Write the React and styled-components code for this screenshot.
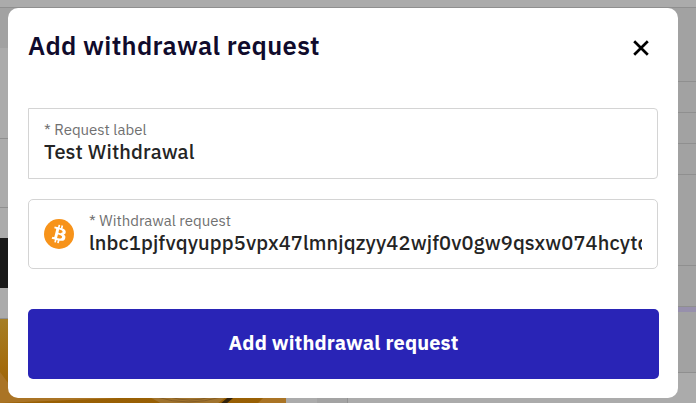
import React from "react";
import styled, { createGlobalStyle } from "styled-components";

const GlobalStyle = createGlobalStyle`
  * { box-sizing: border-box; }
  body { margin: 0; overflow: hidden; font-family: "IBM Plex Sans", Inter, "Noto Sans", sans-serif; font-feature-settings: "cv05" 1; }
`;

const Screen = styled.div`
  height: 403px;
  overflow: hidden;
  background: #ababab;
`;
const TopBar = styled.div`
  height: 8px;
  border-bottom: 1px solid #8f8f8f;
`;
const Columns = styled.div`
  display: grid;
  grid-template-columns: 317px 30px 1fr;
  height: 395px;
`;
const Feed = styled.div`
  display: flex;
  flex-direction: column;
`;
const Band = styled.div`
  flex: none;
  height: ${(p) => p.$h}px;
  background: ${(p) => p.$bg || "transparent"};
  border-bottom: ${(p) => (p.$line ? "1px solid #8f8f8f" : "none")};
`;
const Gutter = styled.div`
  background: #a3a3a3;
`;
const Side = styled(Feed)`
  border-left: 1px solid #929292;
`;
const Artwork = styled.svg`
  display: block;
  flex: none;
  width: 286px;
  height: 84px;
`;

const Modal = styled.section`
  position: absolute;
  top: 8px;
  left: 8px;
  width: 670px;
  height: 390px;
  padding: 20px 19px 19px 20px;
  border-radius: 10px;
  background: #fff;
  display: flex;
  flex-direction: column;
`;
const Header = styled.header`
  display: flex;
  justify-content: space-between;
  height: 80px;
`;
const Title = styled.h1`
  margin: 0;
  color: #100b2c;
  font-size: 25.5px;
  font-weight: 600;
  line-height: 36px;
  letter-spacing: ${(p) => p.$track}px;
  white-space: nowrap;
`;
const CloseButton = styled.button`
  width: 16px;
  height: 16px;
  margin: 12px 10px 0 0;
  padding: 0;
  border: 0;
  background: none;
  svg { display: block; }
`;
const Field = styled.label`
  display: flex;
  align-items: center;
  gap: 15px;
  width: 630px;
  height: ${(p) => p.$h}px;
  margin-bottom: ${(p) => p.$gap}px;
  padding: 0 15px;
  border: 1px solid #d4d4d4;
  border-radius: ${(p) => p.$radius};
`;
const FieldBody = styled.span`
  flex: 1;
  min-width: 0;
  height: 47px;
`;
const Caption = styled.span`
  display: block;
  color: #707070;
  font-size: 15px;
  line-height: 20px;
`;
const Value = styled.span`
  display: block;
  overflow: hidden;
  white-space: nowrap;
  color: #242424;
  font-size: 20px;
  font-weight: 500;
  line-height: 24px;
  padding-bottom: 2px;
  letter-spacing: ${(p) => p.$track}px;
`;
const Submit = styled.button`
  width: 631px;
  height: 70px;
  padding: 0 0 3px;
  border: 0;
  border-radius: 5px;
  background: #2924b6;
  color: #fff;
  font: 700 20px "IBM Plex Sans", Inter, "Noto Sans", sans-serif;
  font-feature-settings: "cv05" 1;
  letter-spacing: ${(p) => p.$track}px;
`;

const sideRows = [74, 31, 31, 31, 91, 41];

function Bitcoin() {
  return (
    <svg width="30" height="30" viewBox="0 0 32 32">
      <circle cx="16" cy="16" r="16" fill="#f7931a" />
      <path
        fill="#fff"
        fillRule="evenodd"
        d="M23.189 14.02c.314-2.096-1.283-3.223-3.465-3.975l.708-2.84-1.728-.43-.69 2.765c-.454-.114-.92-.22-1.385-.326l.695-2.783L15.596 6l-.708 2.839c-.376-.086-.746-.17-1.104-.26l.002-.009-2.384-.595-.46 1.846s1.283.294 1.256.312c.7.175.826.638.805 1.006l-.806 3.235c.048.012.11.03.18.057l-.183-.045-1.13 4.532c-.086.212-.303.531-.793.41.018.025-1.256-.313-1.256-.313l-.858 1.978 2.25.561c.418.105.828.215 1.231.318l-.715 2.872 1.727.43.708-2.84c.472.127.93.245 1.378.357l-.706 2.828 1.728.43.715-2.866c2.948.558 5.164.333 6.097-2.333.752-2.146-.037-3.385-1.588-4.192 1.13-.26 1.98-1.003 2.207-2.538zm-3.95 5.538c-.533 2.147-4.148.986-5.32.695l.95-3.805c1.172.293 4.929.872 4.37 3.11zm.535-5.569c-.487 1.953-3.495.96-4.47.717l.86-3.45c.975.243 4.118.696 3.61 2.733z"
      />
    </svg>
  );
}

export default function App() {
  return (
    <>
      <GlobalStyle />
      <Screen>
        <TopBar />
        <Columns>
          <Feed>
            <Band $h={40} $bg="#a2a2a2" />
            <Band $h={91} $line />
            <Band $h={69} $line />
            <Band $h={30} />
            <Band $h={50} $bg="#191919" />
            <Band $h={31} $line />
            <Artwork viewBox="0 0 287 84" preserveAspectRatio="none">
              <defs>
                <linearGradient id="gold" x1="0" y1="0" x2="0" y2="1">
                  <stop offset="0" stopColor="#a57e26" />
                  <stop offset="0.55" stopColor="#a46c0d" />
                  <stop offset="1" stopColor="#985f03" />
                </linearGradient>
              </defs>
              <rect width="287" height="84" fill="url(#gold)" />
              <path d="M0 53L9 65L120 79L0 84Z" fill="#aa7425" />
              <path d="M150 78L161 84H219L232 74Z" fill="#a0732d" />
              <path d="M157 78Q189 88 222 78M170 78Q190 84 212 78" fill="none" stroke="#795421" strokeWidth="0.7" />
              <path d="M229 78H235L228 84H222Z" fill="#33230b" />
              <path d="M265 78H287V84H259Z" fill="#aa7425" />
            </Artwork>
          </Feed>
          <Gutter />
          <Side>
            {sideRows.map((h, i) => (
              <Band key={i} $h={h} $bg="#a2a2a2" $line />
            ))}
            <Band $h={5} $bg="#9790ac" />
            <Band $h={61} $bg="#a2a2a2" $line />
          </Side>
        </Columns>
      </Screen>
      <Modal role="dialog" aria-modal="true">
        <Header>
          <Title $track={0.34}>Add withdrawal request</Title>
          <CloseButton aria-label="Close">
            <svg width="16" height="16" viewBox="0 0 16 16">
              <path d="M1.2 1.2L14.8 14.8M14.8 1.2L1.2 14.8" stroke="#000" strokeWidth="2.7" />
            </svg>
          </CloseButton>
        </Header>
        <Field $h={71} $gap={20} $radius="0 4px 4px 0">
          <FieldBody>
            <Caption>* Request label</Caption>
            <Value $track={0.14}>Test Withdrawal</Value>
          </FieldBody>
        </Field>
        <Field $h={70} $gap={40} $radius="5px">
          <Bitcoin />
          <FieldBody>
            <Caption>* Withdrawal request</Caption>
            <Value $track={0.13}>lnbc1pjfvqyupp5vpx47lmnjqzyy42wjf0v0gw9qsxw074hcytdqq</Value>
          </FieldBody>
        </Field>
        <Submit $track={0.14}>Add withdrawal request</Submit>
      </Modal>
    </>
  );
}
